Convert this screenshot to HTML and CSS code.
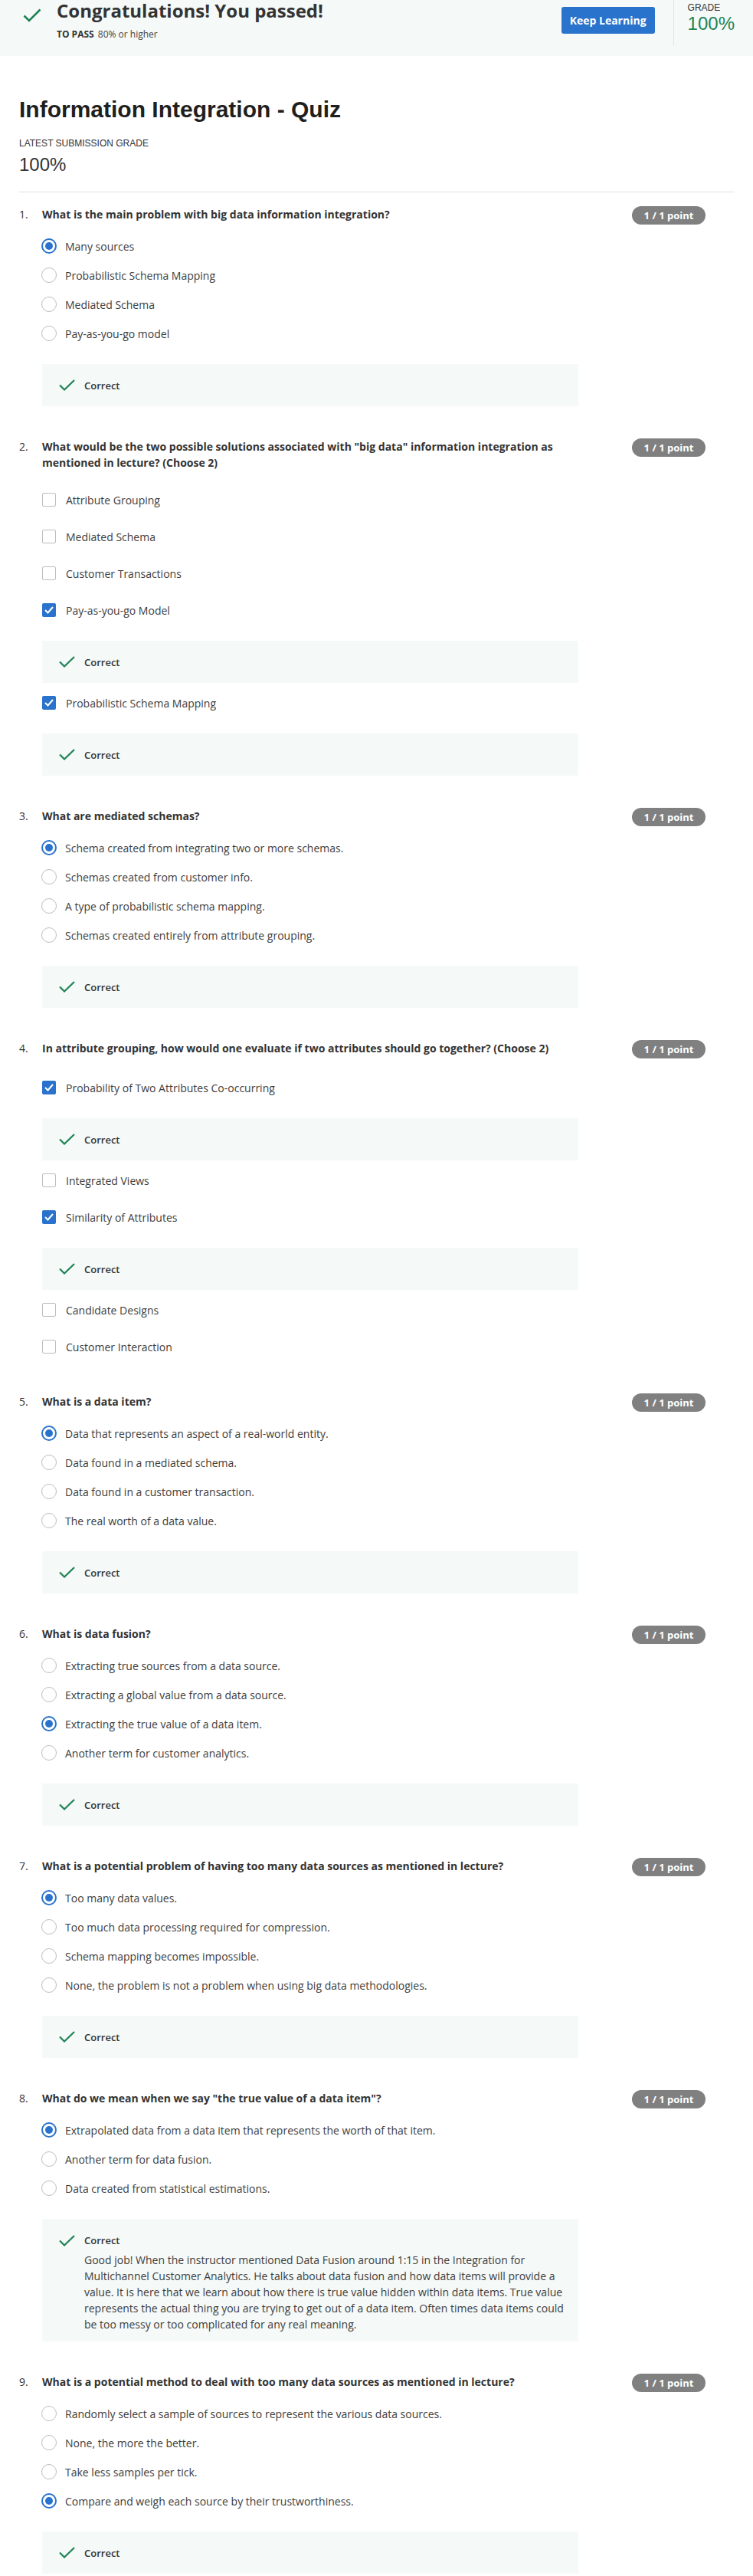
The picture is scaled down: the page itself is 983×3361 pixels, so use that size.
FILE: index.html
```html
<!DOCTYPE html>
<html lang="en">
<head>
<meta charset="utf-8">
<title>Information Integration - Quiz</title>
<link rel="stylesheet" href="styles.css">
</head>
<body>
<header class="banner">
  <div class="banner-left">
    <svg class="banner-check" width="24" height="18" viewBox="0 0 24 18"><path d="M1.5 9.5 L8 16 L22.5 1.5" fill="none" stroke="#1f8354" stroke-width="2.6"/></svg>
    <div class="banner-text">
      <h2 class="banner-title">Congratulations! You passed!</h2>
      <div class="banner-sub"><strong>TO PASS</strong> 80% or higher</div>
    </div>
  </div>
  <div class="banner-right">
    <button class="btn-primary">Keep Learning</button>
    <div class="banner-divider"></div>
    <div class="grade">
      <div class="grade-label">GRADE</div>
      <div class="grade-value">100%</div>
    </div>
  </div>
</header>

<main class="content">
  <h1 class="quiz-title">Information Integration - Quiz</h1>
  <div class="latest-label">LATEST SUBMISSION GRADE</div>
  <div class="latest-value">100%</div>
  <hr class="rule">

  <section class="question">
    <div class="q-head">
      <div class="q-title"><span class="q-num">1.</span><span class="q-text">What is the main problem with big data information integration?</span></div>
      <span class="badge">1 / 1 point</span>
    </div>
    <div class="options">
      <div class="opt radio on"><span class="ctl"></span><span class="label">Many sources</span></div>
      <div class="opt radio"><span class="ctl"></span><span class="label">Probabilistic Schema Mapping</span></div>
      <div class="opt radio"><span class="ctl"></span><span class="label">Mediated Schema</span></div>
      <div class="opt radio"><span class="ctl"></span><span class="label">Pay-as-you-go model</span></div>
    </div>
    <div class="feedback"><svg class="fb-check" width="21" height="15" viewBox="0 0 21 15"><path d="M1 7.5 L7 13.5 L20 1" fill="none" stroke="#1f8354" stroke-width="2.2"/></svg><span class="fb-title">Correct</span></div>
  </section>

  <section class="question">
    <div class="q-head">
      <div class="q-title"><span class="q-num">2.</span><span class="q-text">What would be the two possible solutions associated with "big data" information integration as mentioned in lecture? (Choose 2)</span></div>
      <span class="badge">1 / 1 point</span>
    </div>
    <div class="options checks">
      <div class="opt check"><span class="ctl"></span><span class="label">Attribute Grouping</span></div>
      <div class="opt check"><span class="ctl"></span><span class="label">Mediated Schema</span></div>
      <div class="opt check"><span class="ctl"></span><span class="label">Customer Transactions</span></div>
      <div class="opt check on"><span class="ctl"><svg width="12" height="10" viewBox="0 0 12 10"><path d="M1 5 L4.5 8.5 L11 1" fill="none" stroke="#fff" stroke-width="2"/></svg></span><span class="label">Pay-as-you-go Model</span></div>
      <div class="feedback"><svg class="fb-check" width="21" height="15" viewBox="0 0 21 15"><path d="M1 7.5 L7 13.5 L20 1" fill="none" stroke="#1f8354" stroke-width="2.2"/></svg><span class="fb-title">Correct</span></div>
      <div class="opt check on"><span class="ctl"><svg width="12" height="10" viewBox="0 0 12 10"><path d="M1 5 L4.5 8.5 L11 1" fill="none" stroke="#fff" stroke-width="2"/></svg></span><span class="label">Probabilistic Schema Mapping</span></div>
      <div class="feedback"><svg class="fb-check" width="21" height="15" viewBox="0 0 21 15"><path d="M1 7.5 L7 13.5 L20 1" fill="none" stroke="#1f8354" stroke-width="2.2"/></svg><span class="fb-title">Correct</span></div>
    </div>
  </section>

  <section class="question">
    <div class="q-head">
      <div class="q-title"><span class="q-num">3.</span><span class="q-text">What are mediated schemas?</span></div>
      <span class="badge">1 / 1 point</span>
    </div>
    <div class="options">
      <div class="opt radio on"><span class="ctl"></span><span class="label">Schema created from integrating two or more schemas.</span></div>
      <div class="opt radio"><span class="ctl"></span><span class="label">Schemas created from customer info.</span></div>
      <div class="opt radio"><span class="ctl"></span><span class="label">A type of probabilistic schema mapping.</span></div>
      <div class="opt radio"><span class="ctl"></span><span class="label">Schemas created entirely from attribute grouping.</span></div>
    </div>
    <div class="feedback"><svg class="fb-check" width="21" height="15" viewBox="0 0 21 15"><path d="M1 7.5 L7 13.5 L20 1" fill="none" stroke="#1f8354" stroke-width="2.2"/></svg><span class="fb-title">Correct</span></div>
  </section>

  <section class="question">
    <div class="q-head">
      <div class="q-title"><span class="q-num">4.</span><span class="q-text">In attribute grouping, how would one evaluate if two attributes should go together? (Choose 2)</span></div>
      <span class="badge">1 / 1 point</span>
    </div>
    <div class="options checks">
      <div class="opt check on"><span class="ctl"><svg width="12" height="10" viewBox="0 0 12 10"><path d="M1 5 L4.5 8.5 L11 1" fill="none" stroke="#fff" stroke-width="2"/></svg></span><span class="label">Probability of Two Attributes Co-occurring</span></div>
      <div class="feedback"><svg class="fb-check" width="21" height="15" viewBox="0 0 21 15"><path d="M1 7.5 L7 13.5 L20 1" fill="none" stroke="#1f8354" stroke-width="2.2"/></svg><span class="fb-title">Correct</span></div>
      <div class="opt check"><span class="ctl"></span><span class="label">Integrated Views</span></div>
      <div class="opt check on"><span class="ctl"><svg width="12" height="10" viewBox="0 0 12 10"><path d="M1 5 L4.5 8.5 L11 1" fill="none" stroke="#fff" stroke-width="2"/></svg></span><span class="label">Similarity of Attributes</span></div>
      <div class="feedback"><svg class="fb-check" width="21" height="15" viewBox="0 0 21 15"><path d="M1 7.5 L7 13.5 L20 1" fill="none" stroke="#1f8354" stroke-width="2.2"/></svg><span class="fb-title">Correct</span></div>
      <div class="opt check"><span class="ctl"></span><span class="label">Candidate Designs</span></div>
      <div class="opt check"><span class="ctl"></span><span class="label">Customer Interaction</span></div>
    </div>
  </section>

  <section class="question">
    <div class="q-head">
      <div class="q-title"><span class="q-num">5.</span><span class="q-text">What is a data item?</span></div>
      <span class="badge">1 / 1 point</span>
    </div>
    <div class="options">
      <div class="opt radio on"><span class="ctl"></span><span class="label">Data that represents an aspect of a real-world entity.</span></div>
      <div class="opt radio"><span class="ctl"></span><span class="label">Data found in a mediated schema.</span></div>
      <div class="opt radio"><span class="ctl"></span><span class="label">Data found in a customer transaction.</span></div>
      <div class="opt radio"><span class="ctl"></span><span class="label">The real worth of a data value.</span></div>
    </div>
    <div class="feedback"><svg class="fb-check" width="21" height="15" viewBox="0 0 21 15"><path d="M1 7.5 L7 13.5 L20 1" fill="none" stroke="#1f8354" stroke-width="2.2"/></svg><span class="fb-title">Correct</span></div>
  </section>

  <section class="question">
    <div class="q-head">
      <div class="q-title"><span class="q-num">6.</span><span class="q-text">What is data fusion?</span></div>
      <span class="badge">1 / 1 point</span>
    </div>
    <div class="options">
      <div class="opt radio"><span class="ctl"></span><span class="label">Extracting true sources from a data source.</span></div>
      <div class="opt radio"><span class="ctl"></span><span class="label">Extracting a global value from a data source.</span></div>
      <div class="opt radio on"><span class="ctl"></span><span class="label">Extracting the true value of a data item.</span></div>
      <div class="opt radio"><span class="ctl"></span><span class="label">Another term for customer analytics.</span></div>
    </div>
    <div class="feedback"><svg class="fb-check" width="21" height="15" viewBox="0 0 21 15"><path d="M1 7.5 L7 13.5 L20 1" fill="none" stroke="#1f8354" stroke-width="2.2"/></svg><span class="fb-title">Correct</span></div>
  </section>

  <section class="question">
    <div class="q-head">
      <div class="q-title"><span class="q-num">7.</span><span class="q-text">What is a potential problem of having too many data sources as mentioned in lecture?</span></div>
      <span class="badge">1 / 1 point</span>
    </div>
    <div class="options">
      <div class="opt radio on"><span class="ctl"></span><span class="label">Too many data values.</span></div>
      <div class="opt radio"><span class="ctl"></span><span class="label">Too much data processing required for compression.</span></div>
      <div class="opt radio"><span class="ctl"></span><span class="label">Schema mapping becomes impossible.</span></div>
      <div class="opt radio"><span class="ctl"></span><span class="label">None, the problem is not a problem when using big data methodologies.</span></div>
    </div>
    <div class="feedback"><svg class="fb-check" width="21" height="15" viewBox="0 0 21 15"><path d="M1 7.5 L7 13.5 L20 1" fill="none" stroke="#1f8354" stroke-width="2.2"/></svg><span class="fb-title">Correct</span></div>
  </section>

  <section class="question">
    <div class="q-head">
      <div class="q-title"><span class="q-num">8.</span><span class="q-text">What do we mean when we say "the true value of a data item"?</span></div>
      <span class="badge">1 / 1 point</span>
    </div>
    <div class="options">
      <div class="opt radio on"><span class="ctl"></span><span class="label">Extrapolated data from a data item that represents the worth of that item.</span></div>
      <div class="opt radio"><span class="ctl"></span><span class="label">Another term for data fusion.</span></div>
      <div class="opt radio"><span class="ctl"></span><span class="label">Data created from statistical estimations.</span></div>
    </div>
    <div class="feedback explained"><svg class="fb-check" width="21" height="15" viewBox="0 0 21 15"><path d="M1 7.5 L7 13.5 L20 1" fill="none" stroke="#1f8354" stroke-width="2.2"/></svg><div class="fb-body"><span class="fb-title">Correct</span><p class="fb-text">Good job! When the instructor mentioned Data Fusion around 1:15 in the Integration for Multichannel Customer Analytics. He talks about data fusion and how data items will provide a value. It is here that we learn about how there is true value hidden within data items. True value represents the actual thing you are trying to get out of a data item. Often times data items could be too messy or too complicated for any real meaning.</p></div></div>
  </section>

  <section class="question">
    <div class="q-head">
      <div class="q-title"><span class="q-num">9.</span><span class="q-text">What is a potential method to deal with too many data sources as mentioned in lecture?</span></div>
      <span class="badge">1 / 1 point</span>
    </div>
    <div class="options">
      <div class="opt radio"><span class="ctl"></span><span class="label">Randomly select a sample of sources to represent the various data sources.</span></div>
      <div class="opt radio"><span class="ctl"></span><span class="label">None, the more the better.</span></div>
      <div class="opt radio"><span class="ctl"></span><span class="label">Take less samples per tick.</span></div>
      <div class="opt radio on"><span class="ctl"></span><span class="label">Compare and weigh each source by their trustworthiness.</span></div>
    </div>
    <div class="feedback"><svg class="fb-check" width="21" height="15" viewBox="0 0 21 15"><path d="M1 7.5 L7 13.5 L20 1" fill="none" stroke="#1f8354" stroke-width="2.2"/></svg><span class="fb-title">Correct</span></div>
  </section>
</main>
</body>
</html>
```

FILE: styles.css
```css
* { box-sizing: border-box; }

body {
  margin: 0;
  font-family: "Open Sans", "Liberation Sans", sans-serif;
  color: #373a3c;
  background: #fff;
}

/* ---------- banner ---------- */
.banner {
  height: 73px;
  background: #f5f9f8;
  display: flex;
  justify-content: space-between;
  align-items: flex-start;
  padding: 0 24px 0 30px;
}
.banner-left {
  display: flex;
  align-items: flex-start;
}
.banner-check {
  margin-top: 11px;
  flex: none;
}
.banner-text {
  margin-left: 20px;
}
.banner-title {
  margin: 0;
  font-size: 24px;
  line-height: 28px;
  font-weight: 700;
  color: #333;
}
.banner-sub {
  margin-top: 9px;
  font-size: 12px;
  line-height: 16px;
  color: #444;
}
.banner-sub strong {
  font-weight: 700;
  color: #333;
  margin-right: 2px;
}
.banner-right {
  display: flex;
  align-items: flex-start;
}
.btn-primary {
  margin-top: 9px;
  width: 122px;
  height: 35px;
  border: 0;
  border-radius: 3px;
  background: #2a73cc;
  color: #fff;
  font-family: "Open Sans", sans-serif;
  font-weight: 700;
  font-size: 14px;
  padding: 0;
}
.banner-divider {
  width: 1px;
  height: 59px;
  background: #e1e4e4;
  margin-left: 24px;
}
.grade {
  margin-left: 18px;
  padding-top: 3px;
  font-family: "Liberation Sans", Arial, sans-serif;
}
.grade-label {
  font-size: 12px;
  line-height: 14px;
  color: #333;
}
.grade-value {
  font-size: 24px;
  line-height: 28px;
  color: #1f8354;
}

/* ---------- content ---------- */
.content {
  padding: 0 24px 12px 25px;
}
.quiz-title {
  margin: 50px 0 0;
  font-family: "Liberation Sans", Arial, sans-serif;
  font-size: 30px;
  line-height: 40px;
  font-weight: 700;
  color: #1f1f1f;
}
.latest-label {
  margin-top: 17px;
  font-family: "Liberation Sans", Arial, sans-serif;
  font-size: 12px;
  line-height: 14px;
  color: #333;
}
.latest-value {
  margin-top: 7px;
  font-family: "Liberation Sans", Arial, sans-serif;
  font-size: 24px;
  line-height: 28px;
  color: #333;
}
.rule {
  margin: 21px 0 0;
  border: 0;
  height: 1px;
  background: #e1e1e1;
}

/* ---------- questions ---------- */
.question {
  margin-top: 42px;
}
.rule + .question {
  margin-top: 18px;
}
.q-head {
  display: flex;
  justify-content: space-between;
  align-items: flex-start;
}
.q-title {
  display: flex;
  width: 730px;
  font-size: 14px;
  line-height: 21px;
}
.q-num {
  flex: 0 0 30px;
  color: #333;
}
.q-text {
  flex: 1;
  font-weight: 700;
  color: #333;
}
.badge {
  margin-right: 38px;
  width: 96px;
  height: 24px;
  line-height: 24px;
  border-radius: 12px;
  background: #808080;
  color: #fff;
  font-size: 13px;
  font-weight: 700;
  text-align: center;
}

.options {
  margin-top: 9px;
  padding-left: 30px;
}
.opt {
  display: flex;
  align-items: center;
  height: 38px;
  font-size: 14px;
  color: #3d3d3d;
}
.opt .label {
  margin-left: 11px;
}
.options.checks .opt {
  height: 48px;
  padding-top: 10px;
}
.ctl {
  flex: none;
  display: flex;
  align-items: center;
  justify-content: center;
}
.radio .ctl {
  width: 20px;
  height: 20px;
  margin-left: -1px;
  border-radius: 50%;
  border: 1.5px solid #bdbdbd;
}
.radio.on .ctl {
  border: 2px solid #2a73cc;
}
.radio.on .ctl::after {
  content: "";
  width: 10px;
  height: 10px;
  border-radius: 50%;
  background: #2a73cc;
}
.check .ctl {
  width: 18px;
  height: 18px;
  margin-right: 2px;
  border: 1.5px solid #bdbdbd;
  border-radius: 2px;
}
.check.on .ctl {
  border: 0;
  background: #2a73cc;
}

/* ---------- feedback ---------- */
.feedback {
  margin-left: 30px;
  margin-top: 21px;
  width: 700px;
  height: 55px;
  background: #f5f9f8;
  display: flex;
  align-items: center;
  padding: 0 16px 0 22px;
}
.options .feedback {
  margin-left: 0;
}
.options .feedback + .opt {
  margin-top: -3px;
}
.fb-check {
  flex: none;
}
.fb-title {
  margin-left: 12px;
  font-size: 13px;
  font-weight: 600;
  line-height: 20px;
  color: #333;
}
.feedback.explained {
  height: auto;
  align-items: flex-start;
  padding: 18px 16px 12px 22px;
}
.feedback.explained .fb-check {
  margin-top: 3px;
}
.fb-body {
  margin-left: 12px;
}
.fb-body .fb-title {
  margin-left: 0;
  display: block;
}
.fb-text {
  margin: 5px 0 0;
  font-size: 14px;
  line-height: 21px;
  color: #3d3d3d;
}
```
